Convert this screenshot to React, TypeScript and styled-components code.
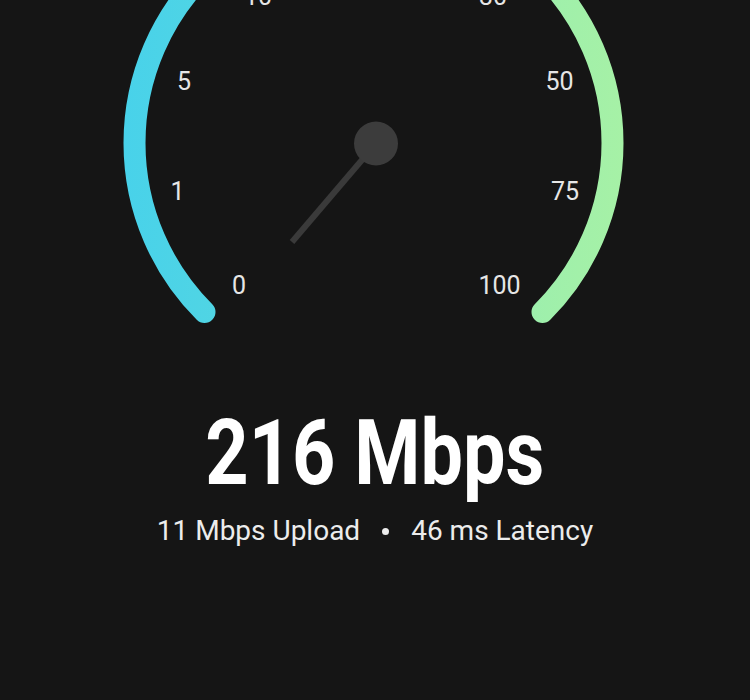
import React from 'react';
import styled, {createGlobalStyle} from 'styled-components';

const CX = 373.5;
const CY = 143;
const R = 239;

const HUB = {x: 376, y: 143.5};
const NEEDLE_TIP = {x: 292, y: 242};

const ticks = [
    {label: '0', x: 239, y: 285},
    {label: '1', x: 177.5, y: 191},
    {label: '5', x: 184, y: 81},
    {label: '10', x: 258, y: -4},
    {label: '30', x: 493, y: -4},
    {label: '50', x: 559.5, y: 81},
    {label: '75', x: 565, y: 191},
    {label: '100', x: 499.5, y: 285},
];

const arcPoint = (deg: number) => {
    const rad = (deg * Math.PI) / 180;
    return {x: CX + (R * Math.sin(rad)), y: CY - (R * Math.cos(rad))};
};

const GlobalStyle = createGlobalStyle`
    html, body {
        margin: 0;
        padding: 0;
        background: #151515;
    }
`;

const Screen = styled.div`
    width: 750px;
    height: 700px;
    overflow: hidden;
    display: flex;
    flex-direction: column;
    align-items: center;
    background: #151515;
    font-family: Roboto, "Liberation Sans", sans-serif;
    color: #ffffff;
`;

const Gauge = styled.svg`
    display: block;
    width: 750px;
    height: 340px;
    flex-shrink: 0;
`;

const TickLabel = styled.text`
    font-family: Roboto, "Liberation Sans", sans-serif;
    font-size: 25px;
    fill: #e6e6e6;
`;

const Reading = styled.div`
    display: flex;
    flex-direction: column;
    align-items: center;
    margin-top: 69px;
`;

// the original face is a condensed DIN; squeeze Roboto to the same width
const Speed = styled.div`
    font-size: 90px;
    font-weight: 700;
    line-height: 90px;
    transform: scaleX(0.84);
`;

const Details = styled.div`
    display: flex;
    align-items: center;
    gap: 22px;
    margin-top: 12px;
    font-size: 28px;
    line-height: 40px;
    color: #ececec;
`;

const Dot = styled.span`
    width: 7px;
    height: 7px;
    border-radius: 50%;
    background: #ececec;
`;

const App = () => {
    const start = arcPoint(-135);
    const end = arcPoint(135);

    return (
        <>
            <GlobalStyle/>
            <Screen>
                <Gauge viewBox='0 0 750 340'>
                    <defs>
                        <linearGradient
                            id='arcGrad'
                            gradientUnits='userSpaceOnUse'
                            x1='123'
                            y1='0'
                            x2='623'
                            y2='0'
                        >
                            <stop offset='0' stopColor='#48d2ea'/>
                            <stop offset='0.3' stopColor='#55d6e0'/>
                            <stop offset='0.7' stopColor='#98eeb0'/>
                            <stop offset='1' stopColor='#a6f1a6'/>
                        </linearGradient>
                    </defs>
                    <path
                        d={`M ${start.x} ${start.y} A ${R} ${R} 0 1 1 ${end.x} ${end.y}`}
                        fill='none'
                        stroke='url(#arcGrad)'
                        strokeWidth={22}
                        strokeLinecap='round'
                    />
                    {ticks.map((t) => (
                        <TickLabel
                            key={t.label}
                            x={t.x}
                            y={t.y + 9}
                            textAnchor='middle'
                        >
                            {t.label}
                        </TickLabel>
                    ))}
                    <line
                        x1={HUB.x}
                        y1={HUB.y}
                        x2={NEEDLE_TIP.x}
                        y2={NEEDLE_TIP.y}
                        stroke='#3a3a3a'
                        strokeWidth={6}
                    />
                    <circle
                        cx={HUB.x}
                        cy={HUB.y}
                        r={22}
                        fill='#3c3c3c'
                    />
                </Gauge>
                <Reading>
                    <Speed>{'216 Mbps'}</Speed>
                    <Details>
                        <span>{'11 Mbps Upload'}</span>
                        <Dot/>
                        <span>{'46 ms Latency'}</span>
                    </Details>
                </Reading>
            </Screen>
        </>
    );
};

export default App;
